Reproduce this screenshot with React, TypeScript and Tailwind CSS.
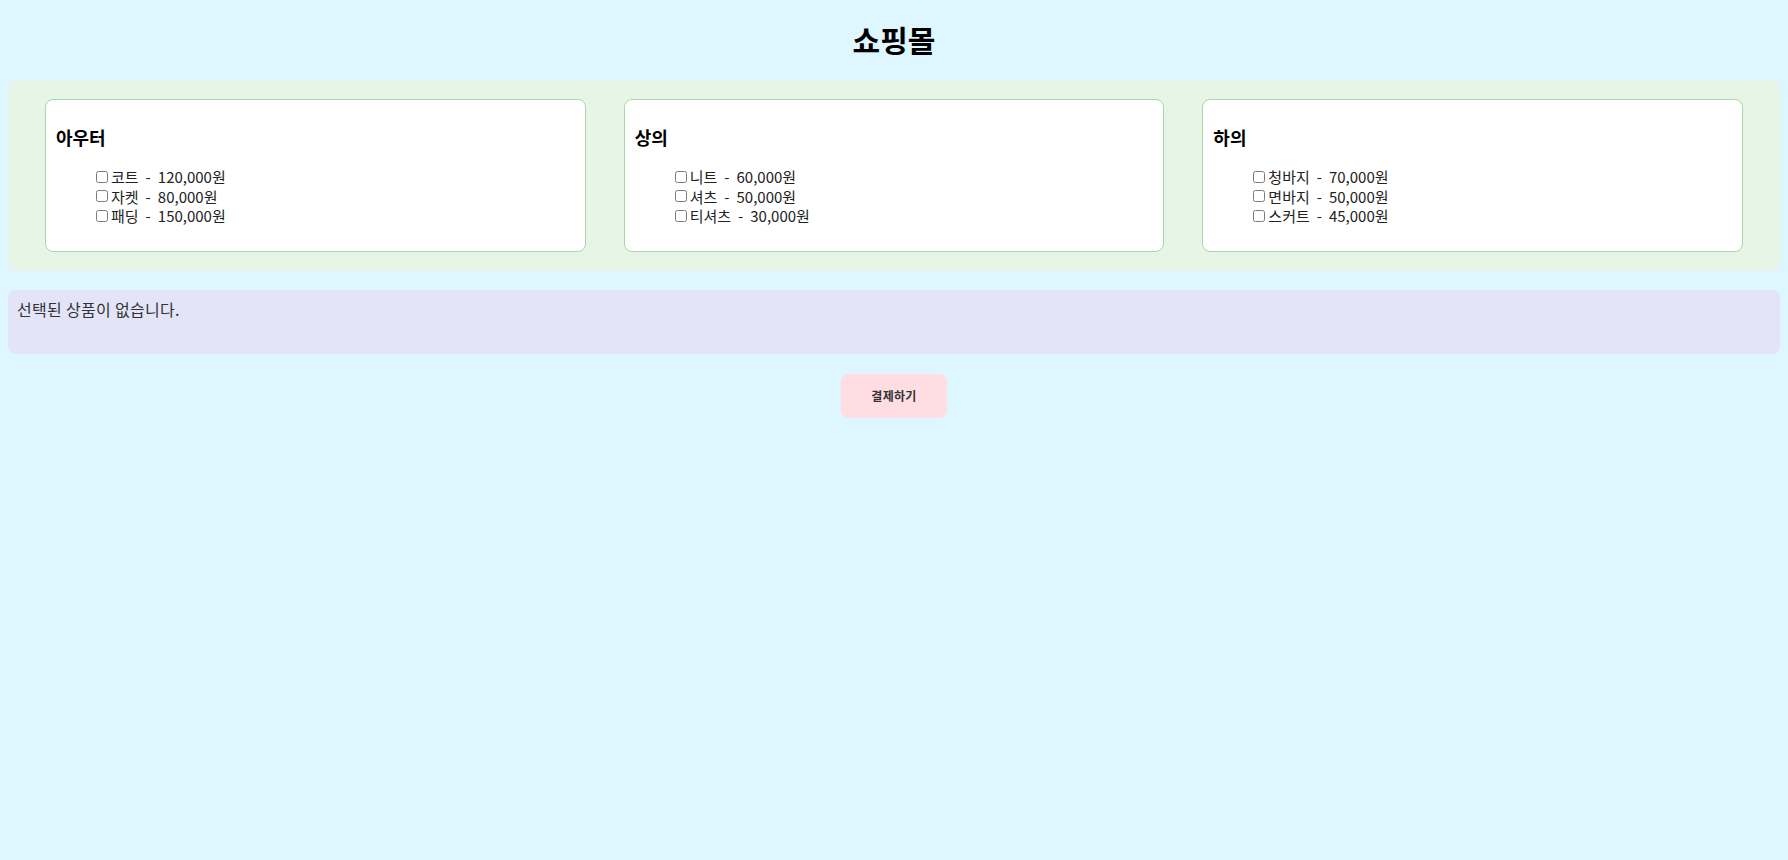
import { useState } from "react";

type Item = { name: string; price: number };
type Category = { title: string; items: Item[] };

const categories: Category[] = [
  {
    title: "아우터",
    items: [
      { name: "코트", price: 120000 },
      { name: "자켓", price: 80000 },
      { name: "패딩", price: 150000 },
    ],
  },
  {
    title: "상의",
    items: [
      { name: "니트", price: 60000 },
      { name: "셔츠", price: 50000 },
      { name: "티셔츠", price: 30000 },
    ],
  },
  {
    title: "하의",
    items: [
      { name: "청바지", price: 70000 },
      { name: "면바지", price: 50000 },
      { name: "스커트", price: 45000 },
    ],
  },
];

const fmt = (n: number) => n.toLocaleString("en-US");

export default function App() {
  const [selected, setSelected] = useState<string[]>([]);

  const toggle = (key: string) =>
    setSelected((s) => (s.includes(key) ? s.filter((k) => k !== key) : [...s, key]));

  const allItems = categories.flatMap((c) => c.items);
  const chosen = allItems.filter((i) => selected.includes(i.name));
  const total = chosen.reduce((a, b) => a + b.price, 0);

  return (
    <div
      className="min-h-[860px] w-full bg-[#def6ff] text-[#222] overflow-hidden"
      style={{ fontFamily: '"Noto Sans CJK KR", "Noto Sans", "Liberation Sans", sans-serif' }}
    >
      <h1 className="mt-[19px] mb-[21px] text-center text-[30px] leading-[40px] font-bold text-black">
        쇼핑몰
      </h1>

      <div className="mx-[8px] flex gap-[38px] rounded-[8px] bg-[#e7f5e7] px-[37px] py-[19px]">
        {categories.map((c) => (
          <div
            key={c.title}
            className="flex-1 rounded-[8px] border border-[#a8d8a8] bg-white px-[10px] pt-[25px] pb-[25px]"
          >
            <h3 className="text-[18px] leading-[24px] font-bold text-black">{c.title}</h3>
            <ul className="mt-[18px] pl-[40px]">
              {c.items.map((it) => (
                <li key={it.name} className="flex items-center text-[15px] leading-[19.5px] text-[#222]">
                  <label className="flex items-center cursor-pointer">
                    <input
                      type="checkbox"
                      checked={selected.includes(it.name)}
                      onChange={() => toggle(it.name)}
                      className="appearance-none w-[12px] h-[12px] mr-[3px] border border-[#7a7a7a] rounded-[2.5px] bg-white checked:bg-[#1a73e8] checked:border-[#1a73e8]"
                    />
                    <span className="flex items-center">
                      <span>{it.name}</span>
                      <span className="mx-[7px]">-</span>
                      <span>{fmt(it.price)}원</span>
                    </span>
                  </label>
                </li>
              ))}
            </ul>
          </div>
        ))}
      </div>

      <div className="mx-[8px] mt-[19px] min-h-[64px] rounded-[8px] bg-[#e4e4f8] px-[9px] pt-[9px] pb-[12px] text-[16px] leading-[20px] tracking-[0.3px] text-[#333]">
        {chosen.length === 0 ? (
          <p>선택된 상품이 없습니다.</p>
        ) : (
          <div>
            {chosen.map((c) => (
              <p key={c.name}>
                {c.name} - {fmt(c.price)}원
              </p>
            ))}
            <p className="font-bold">총액: {fmt(total)}원</p>
          </div>
        )}
      </div>

      <div className="mt-[20px] flex justify-center">
        <button className="h-[44px] w-[106px] rounded-[8px] bg-[#ffdde2] text-[12px] font-bold tracking-[0.3px] text-[#333]">
          결제하기
        </button>
      </div>
    </div>
  );
}
